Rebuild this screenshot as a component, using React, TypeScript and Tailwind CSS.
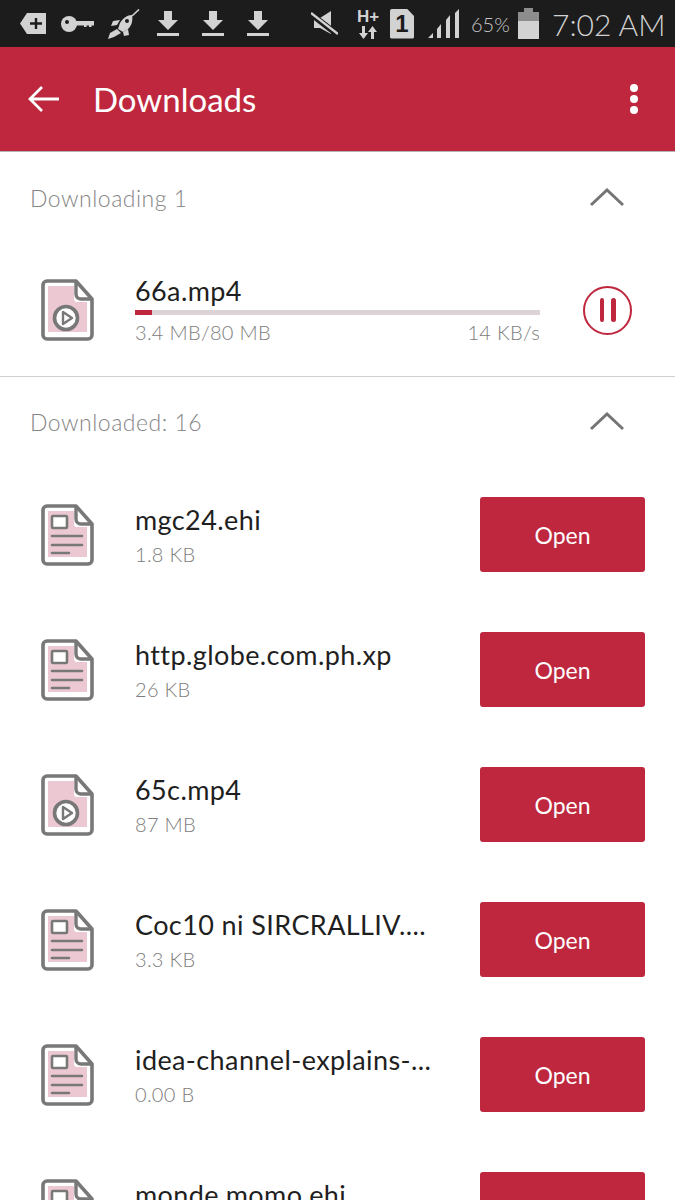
import React from "react";

const FILE_OUTLINE = "M6 2H35L51 20V56a4 4 0 0 1-4 4H6a4 4 0 0 1-4-4V6a4 4 0 0 1 4-4Z";

function FileBase({ children }: { children: React.ReactNode }) {
  return (
    <svg width="54" height="62" viewBox="0 0 54 62" className="shrink-0">
      <path d="M7 7H33V20a3 3 0 0 0 3 3H46V53H7Z" fill="#ecc9d2" />
      <path d={FILE_OUTLINE} fill="none" stroke="#787878" strokeWidth="3.6" strokeLinejoin="round" />
      <path d="M35 3V15a5 5 0 0 0 5 5H50" fill="none" stroke="#787878" strokeWidth="3.4" strokeLinejoin="round" />
      {children}
    </svg>
  );
}

function VideoIcon() {
  return (
    <FileBase>
      <circle cx="25" cy="39" r="11.5" fill="#fff" stroke="#787878" strokeWidth="3.6" />
      <path d="M22 33L31 39L22 45Z" fill="none" stroke="#787878" strokeWidth="2.4" strokeLinejoin="round" />
    </FileBase>
  );
}

function DocIcon() {
  return (
    <FileBase>
      <rect x="11" y="12" width="15" height="12" rx="1" fill="#fff" stroke="#787878" strokeWidth="2.6" />
      <path d="M11 32H41M11 41H41M11 49H28" stroke="#787878" strokeWidth="2.6" fill="none" strokeLinecap="round" />
    </FileBase>
  );
}

function Chevron() {
  return (
    <svg width="36" height="20" viewBox="0 0 36 20" className="shrink-0">
      <path d="M2 17L18 2L34 17" fill="none" stroke="#757575" strokeWidth="3" />
    </svg>
  );
}

function DownloadGlyph() {
  return (
    <svg width="22" height="25" viewBox="0 0 22 25" className="shrink-0">
      <path d="M7 0H15V9H21L11 19L1 9H7Z" fill="#d2d2d2" />
      <rect x="0" y="22" width="22" height="3" fill="#d2d2d2" />
    </svg>
  );
}

function StatusBar() {
  return (
    <div className="h-[47px] bg-[#1c1c1c] flex items-center shrink-0 text-[#d2d2d2]">
      <svg width="26" height="21" viewBox="0 0 26 21" className="ml-[20px] shrink-0">
        <path d="M7 0H26V21H7L0 10.5Z" fill="#d2d2d2" />
        <path d="M16 5V16M10 10.5H22" stroke="#1c1c1c" strokeWidth="2.4" />
      </svg>
      <svg width="33" height="16" viewBox="0 0 33 16" className="ml-[15px] shrink-0">
        <circle cx="8" cy="8" r="8" fill="#d2d2d2" />
        <circle cx="6" cy="6" r="2" fill="#1c1c1c" />
        <path d="M14 5H33V9.5H30.5V11H28V9.5H25.5V11H23V9.5H14Z" fill="#d2d2d2" />
      </svg>
      <svg width="33" height="30" viewBox="0 0 33 30" className="ml-[13px] shrink-0">
        <path d="M25 6C20 6 16 9 13 14L11 20L16 23L21 20C25 16 26 11 25 6Z" fill="#d2d2d2" />
        <path d="M25 7L32 0.5" fill="none" stroke="#d2d2d2" strokeWidth="1.6" />
        <path d="M13 11L6 12L4 17L10 16ZM21 20L22 26L17 27L16 23Z" fill="#d2d2d2" />
        <path d="M10 20L14 24L7 28L1 30L3 24Z" fill="#d2d2d2" />
        <circle cx="20" cy="12" r="2" fill="#1c1c1c" />
      </svg>
      <div className="ml-[17px] flex gap-[23px]">
        <DownloadGlyph />
        <DownloadGlyph />
        <DownloadGlyph />
      </div>
      <svg width="27" height="25" viewBox="0 0 27 25" className="ml-[42px] shrink-0">
        <path d="M3 7H9L20 0V23L9 17H3Z" fill="#d2d2d2" />
        <path d="M0 3L27 24" stroke="#1c1c1c" strokeWidth="6" />
        <path d="M0 2L27 23" stroke="#d2d2d2" strokeWidth="2.4" />
      </svg>
      <div className="ml-[18px] w-[24px] flex flex-col items-center shrink-0">
        <span className="text-[17px] leading-[16px] font-['Liberation_Sans',sans-serif] font-bold">H+</span>
        <svg width="18" height="13" viewBox="0 0 18 13" className="mt-[1px]">
          <path d="M3 0H6V7H9L4.5 13L0 7H3ZM12 13H15V6H18L13.5 0L9 6H12Z" fill="#d2d2d2" />
        </svg>
      </div>
      <div className="ml-[10px] w-[24px] h-[30px] bg-[#d2d2d2] rounded-[2px] [clip-path:polygon(0_0,70%_0,100%_25%,100%_100%,0_100%)] flex items-center justify-center text-[#1c1c1c] font-['Liberation_Sans',sans-serif] font-bold text-[24px] leading-none shrink-0">
        1
      </div>
      <svg width="31" height="29" viewBox="0 0 31 29" className="ml-[14px] shrink-0">
        <path d="M0 29L5 24V29Z M9 29V20L13 15V29Z M18 29V11L22 6V29Z M27 29V4L31 0V29Z" fill="#d2d2d2" />
      </svg>
      <span className="ml-[12px] w-[40px] text-[20px] leading-none text-[#c8c8c8] font-['Lato',sans-serif] font-light whitespace-nowrap shrink-0">65%</span>
      <svg width="21" height="31" viewBox="0 0 21 31" className="ml-[7px] shrink-0">
        <rect x="0" y="4" width="21" height="27" fill="#d2d2d2" />
        <rect x="0" y="4" width="21" height="9" fill="#8d8d8d" />
        <rect x="6" y="0" width="9" height="4" fill="#8d8d8d" />
      </svg>
      <span className="ml-[13px] text-[30px] leading-none text-[#d2d2d2] font-['Lato',sans-serif] font-light whitespace-nowrap">7:02 AM</span>
    </div>
  );
}

function Header() {
  return (
    <div className="h-[105px] bg-[#be273e] flex items-center shrink-0 border-b border-[#b4b4b4]">
      <svg width="32" height="28" viewBox="0 0 32 28" className="ml-[27px] shrink-0">
        <path d="M32 14H3M15 2L3 14L15 26" fill="none" stroke="#fff" strokeWidth="2.8" />
      </svg>
      <span className="ml-[34px] text-[33px] text-white font-['Lato',sans-serif] leading-none flex-1">Downloads</span>
      <div className="mr-[37px] flex flex-col gap-[3px]">
        <span className="w-[8px] h-[8px] rounded-full bg-white" />
        <span className="w-[8px] h-[8px] rounded-full bg-white" />
        <span className="w-[8px] h-[8px] rounded-full bg-white" />
      </div>
    </div>
  );
}

function SectionHeader({ label, h }: { label: string; h: string }) {
  return (
    <div className={`${h} flex items-center justify-between pl-[30px] pr-[50px] shrink-0`}>
      <span className="text-[23px] text-[#858585] font-['Lato',sans-serif] font-light tracking-[0.5px] leading-none">{label}</span>
      <Chevron />
    </div>
  );
}

function ActiveRow() {
  return (
    <div className="h-[133px] flex items-center pl-[41px] border-b border-[#cfcfcf] shrink-0">
      <VideoIcon />
      <div className="ml-[40px] w-[405px]">
        <div className="text-[27px] leading-[30px] text-[#1f1f1f] font-['Lato',sans-serif] tracking-[0.4px]">66a.mp4</div>
        <div className="mt-[4px] h-[5px] bg-[#dcd3d5] overflow-hidden">
          <div className="h-full w-[17px] bg-[#be273e]" />
        </div>
        <div className="mt-[5px] flex justify-between text-[20px] leading-[24px] text-[#7d7d7d] font-['Lato',sans-serif] font-light tracking-[0.3px]">
          <span>3.4 MB/80 MB</span>
          <span>14 KB/s</span>
        </div>
      </div>
      <div className="ml-[43px] w-[49px] h-[49px] rounded-full border-[2.5px] border-[#be273e] flex items-center justify-center gap-[7px] shrink-0">
        <span className="w-[4.5px] h-[24px] rounded-full bg-[#be273e]" />
        <span className="w-[4.5px] h-[24px] rounded-full bg-[#be273e]" />
      </div>
    </div>
  );
}

const FILES = [
  { name: "mgc24.ehi", size: "1.8 KB", video: false },
  { name: "http.globe.com.ph.xp", size: "26 KB", video: false },
  { name: "65c.mp4", size: "87 MB", video: true },
  { name: "Coc10 ni SIRCRALLIV....", size: "3.3 KB", video: false },
  { name: "idea-channel-explains-...", size: "0.00 B", video: false },
  { name: "monde.momo.ehi", size: "1.1 KB", video: false },
];

function FileRow({ name, size, video }: { name: string; size: string; video: boolean }) {
  return (
    <div className="h-[135px] flex items-center pl-[41px] pr-[30px] shrink-0">
      {video ? <VideoIcon /> : <DocIcon />}
      <div className="ml-[40px] flex-1 min-w-0">
        <div className="text-[27px] leading-[32px] text-[#1f1f1f] font-['Lato',sans-serif] tracking-[0.4px] whitespace-nowrap">{name}</div>
        <div className="mt-[6px] text-[20px] leading-[24px] text-[#7d7d7d] font-['Lato',sans-serif] font-light tracking-[0.3px]">{size}</div>
      </div>
      <div className="w-[165px] h-[75px] rounded-[3px] bg-[#be273e] flex items-center justify-center pt-[2px] text-[23px] text-white font-['Lato',sans-serif] shrink-0">
        Open
      </div>
    </div>
  );
}

export default function App() {
  return (
    <div className="w-[675px] h-[1200px] overflow-hidden bg-white flex flex-col">
      <StatusBar />
      <Header />
      <SectionHeader label="Downloading 1" h="h-[92px]" />
      <ActiveRow />
      <SectionHeader label="Downloaded: 16" h="h-[90px]" />
      {FILES.map((f) => (
        <FileRow key={f.name} {...f} />
      ))}
    </div>
  );
}
